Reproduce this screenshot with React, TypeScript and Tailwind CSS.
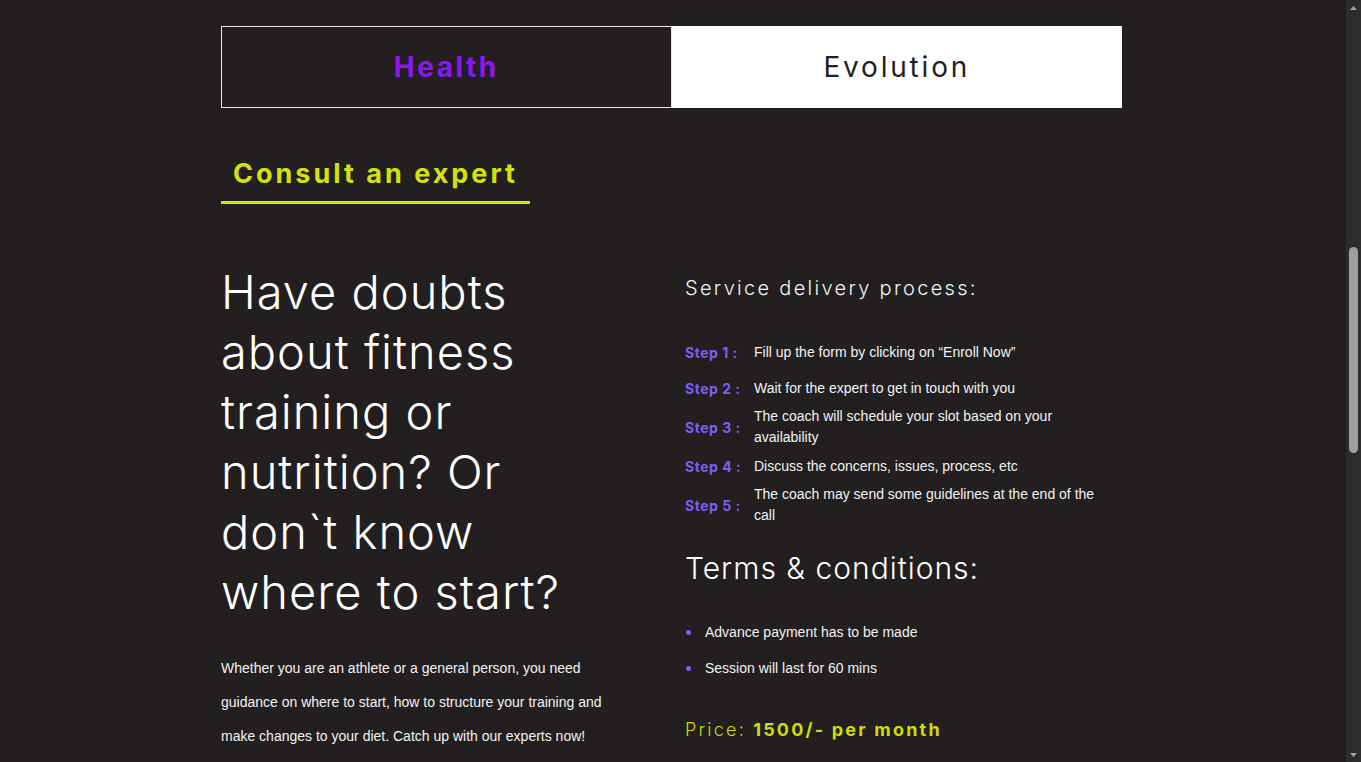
const display = "font-['Inter','DejaVu_Sans',sans-serif]";
const body = "font-['Liberation_Sans',Arial,sans-serif]";

const steps = [
  { label: "Step 1 :", text: "Fill up the form by clicking on \u201cEnroll Now\u201d" },
  { label: "Step 2 :", text: "Wait for the expert to get in touch with you" },
  { label: "Step 3 :", text: "The coach will schedule your slot based on your availability" },
  { label: "Step 4 :", text: "Discuss the concerns, issues, process, etc" },
  { label: "Step 5 :", text: "The coach may send some guidelines at the end of the call" },
];

const terms = ["Advance payment has to be made", "Session will last for 60 mins"];

function Arrow({ down }: { down?: boolean }) {
  return (
    <div className="flex h-[15px] items-center justify-center">
      <svg width="7" height="4" viewBox="0 0 7 4" className={down ? "rotate-180" : ""}>
        <polygon points="3.5,0 7,4 0,4" fill="#a3a3a3" />
      </svg>
    </div>
  );
}

// browser scrollbar, page is scrolled part way down
function Scrollbar() {
  return (
    <aside className="flex h-screen w-[15px] shrink-0 flex-col bg-[#2c2c2c]">
      <Arrow />
      <div className="h-[232px]" />
      <div className="mx-auto h-[206px] w-[9px] rounded-full bg-[#9e9e9e]" />
      <div className="flex-1" />
      <Arrow down />
    </aside>
  );
}

export default function App() {
  return (
    <div className="flex h-screen overflow-hidden bg-[#231f20]">
      <main className="h-screen flex-1 overflow-hidden">
        <section className="mx-auto w-[904px] pt-[26px] pr-[3px]">
          {/* tabs */}
          <div className="grid h-[82px] grid-cols-2">
            <button className="flex items-center justify-center border border-[#e8e8e8]">
              <span className={`${display} text-[28px] font-bold tracking-[2.5px] text-[#8a17f2]`}>
                Health
              </span>
            </button>
            <button className="flex items-center justify-center bg-white">
              <span className={`${display} text-[28px] font-normal tracking-[2.8px] text-[#231f20]`}>
                Evolution
              </span>
            </button>
          </div>

          <div className="mt-[48px]">
            <h2
              className={`${display} inline-block border-b-[3px] border-[#d4e20c] px-3 pb-[9px] text-[27px] leading-[36px] font-bold tracking-[3px] text-[#d4e20c]`}
            >
              Consult an expert
            </h2>
          </div>

          <div className="mt-[58px] flex">
            {/* left column */}
            <div className="w-[464px] shrink-0">
              <h3 className={`${display} text-[47px] leading-[60px] font-light tracking-[1px] text-white`}>
                Have doubts
                <br />
                about fitness
                <br />
                training or
                <br />
                nutrition? Or
                <br />
                don`t know
                <br />
                where to start?
              </h3>
              <p className={`${body} mt-[29px] w-[400px] text-[14px] leading-[34px] text-[#f2f2f2]`}>
                Whether you are an athlete or a general person, you need guidance on where to
                start, how to structure your training and make changes to your diet. Catch up
                with our experts now!
              </p>
            </div>

            {/* right column */}
            <div className="w-[420px] pt-[12px]">
              <h4 className={`${display} text-[20px] leading-[28px] font-light tracking-[2.3px] text-[#f2f2f2]`}>
                Service delivery process:
              </h4>

              <ul className="mt-[32px]">
                {steps.map((s) => (
                  <li key={s.label} className="flex min-h-[36px] items-center">
                    <span
                      className={`${display} w-[69px] shrink-0 text-[14px] font-bold tracking-[0.5px] text-[#7c5ff2]`}
                    >
                      {s.label}
                    </span>
                    <span className={`${body} text-[14px] leading-[21px] text-[#f2f2f2]`}>
                      {s.text}
                    </span>
                  </li>
                ))}
              </ul>

              <h4 className={`${display} mt-[22px] text-[30px] leading-[40px] font-light tracking-[1px] text-white`}>
                Terms &amp; conditions:
              </h4>

              <ul className="mt-[26px]">
                {terms.map((t) => (
                  <li key={t} className="flex h-[36px] items-center">
                    <span className="ml-[1px] h-[5px] w-[5px] shrink-0 rounded-full bg-[#7c5ff2]" />
                    <span className={`${body} ml-[14px] text-[14px] text-[#f2f2f2]`}>{t}</span>
                  </li>
                ))}
              </ul>

              <p
                className={`${display} mt-[31px] text-[18px] leading-[26px] tracking-[2.2px] text-[#cfdc0a]`}
              >
                <span className="font-light">Price: </span>
                <span className="font-bold">1500/- per month</span>
              </p>
            </div>
          </div>
        </section>
      </main>
      <Scrollbar />
    </div>
  );
}
